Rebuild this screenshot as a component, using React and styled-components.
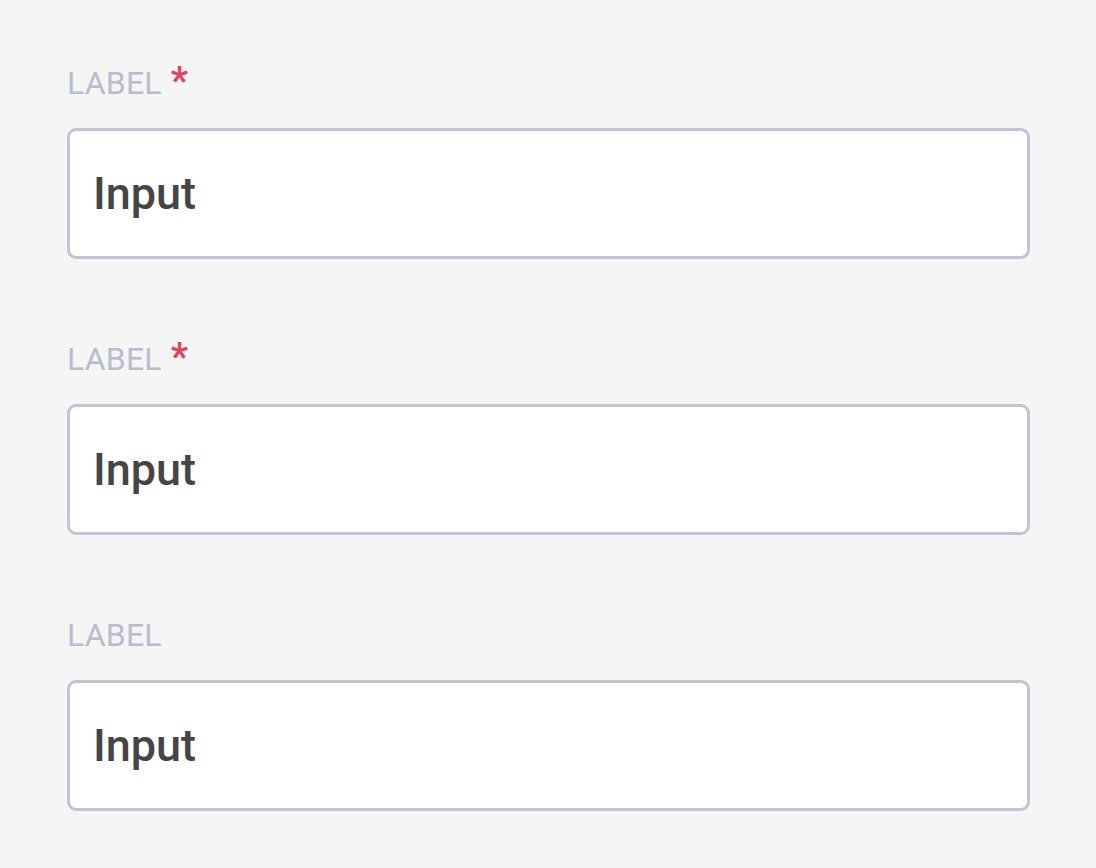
import React from 'react'
import styled, {createGlobalStyle} from 'styled-components'

const GlobalStyle = createGlobalStyle`
  html, body {
    margin: 0;
    padding: 0;
    background: #f5f5f5;
    font-family: Roboto, "Liberation Sans", sans-serif;
  }
`

const Page = styled.div`
  display: flex;
  flex-direction: column;
  gap: 80px;
  padding: 63px 66px 0 67px;
  width: 963px;
`

const Field = styled.div`
  display: flex;
  flex-direction: column;
  gap: 25px;
`

const Label = styled.label`
  display: flex;
  align-items: flex-start;
  gap: 9px;
  font-size: 32px;
  line-height: 40px;
  color: #b8bdcd;
  letter-spacing: 0.2px;
`

const Star = styled.span`
  color: #e4405e;
  font-size: 38px;
  line-height: 36px;
  font-weight: 700;
`

const Box = styled.input`
  box-sizing: border-box;
  width: 963px;
  height: 131px;
  border: 3px solid #bfc5d7;
  border-radius: 9px;
  background: #fff;
  padding: 0 23px;
  font-family: Roboto, "Liberation Sans", sans-serif;
  font-size: 45px;
  font-weight: 500;
  color: #454545;
  outline: none;
`

const fields = [
  {name: 'a', required: true},
  {name: 'b', required: true},
  {name: 'c', required: false},
]

export default function App() {
  return (
    <>
      <GlobalStyle />
      <Page>
        {fields.map(f => (
          <Field key={f.name}>
            <Label htmlFor={f.name}>
              LABEL
              {f.required && <Star>*</Star>}
            </Label>
            <Box id={f.name} defaultValue="Input" />
          </Field>
        ))}
      </Page>
    </>
  )
}
